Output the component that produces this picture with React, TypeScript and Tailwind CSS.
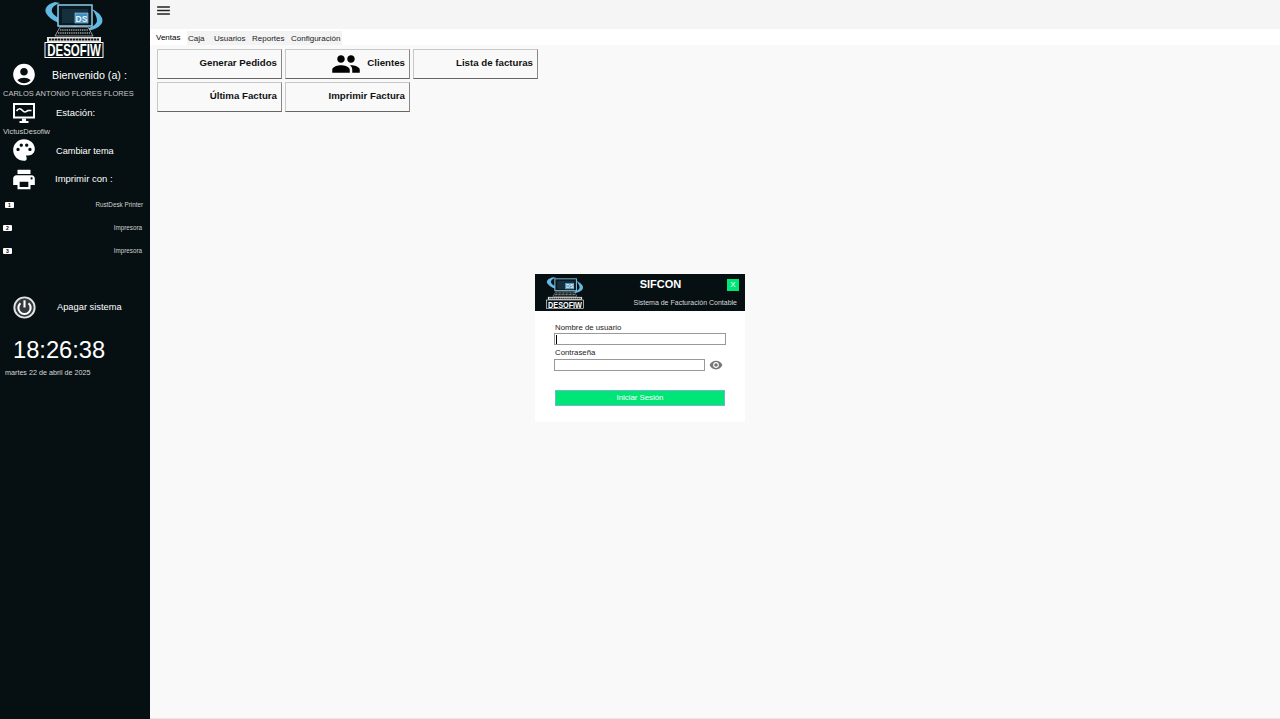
import { MdAccountCircle, MdMenu, MdPalette, MdPeople, MdPrint, MdVisibility } from "react-icons/md";

const font = "font-['Liberation_Sans',Arial,sans-serif]";

function Logo({ className }: { className: string }) {
  return (
    <svg viewBox="44 0 60 62" preserveAspectRatio="none" className={`block ${className}`}>
      <path d="M55 2 C47 4 44 9 46 13 C50 21 62 25 80 28 C68 23 55 18 52 12 C51 8 54 5 60 3 Z" fill="#63b9e2" />
      <path d="M92 9 C100 13 104 18 102 23 C99 29 88 32 76 32 C88 29 96 26 97 21 C97 17 95 13 92 9 Z" fill="#63b9e2" />
      <rect x="58" y="5" width="34" height="21" fill="#0a1a22" stroke="#8ccbe8" strokeWidth="1.5" />
      <rect x="62" y="9" width="26" height="14" fill="#14303f" />
      <rect x="75" y="13" width="13" height="10" fill="#3d8fc0" stroke="#cfe8f3" strokeWidth="0.5" />
      <text x="81.5" y="21.5" textAnchor="middle" fontSize="8.5" fontWeight="700" fill="#e8f6fc" fontFamily="Liberation Sans">DS</text>
      <path d="M55 36 L60 27 H88 L93 36 Z" fill="#060f12" stroke="#d0d0d0" strokeWidth="0.7" />
      <path d="M60 30 H88 M58 33 H90" stroke="#e5e5e5" strokeWidth="1.2" strokeDasharray="1.4 .8" />
      <rect x="47" y="37" width="54" height="5" fill="#e0e0e0" />
      <path d="M49 39.5 H99" stroke="#111" strokeWidth="1.8" strokeDasharray="2.4 .6" />
      <rect x="45" y="42.5" width="58" height="15" fill="#060f12" stroke="#fff" strokeWidth="1" />
      <text transform="translate(74 56) scale(1 1.4)" textAnchor="middle" fontSize="11.5" fontWeight="700" fill="#fff" fontFamily="Liberation Sans">DESOFIW</text>
    </svg>
  );
}

function MonitorIcon() {
  return (
    <svg viewBox="0 0 22 20" className="w-[22px] h-[20px]">
      <rect x="1" y="1" width="20" height="13.5" fill="none" stroke="#fff" strokeWidth="2" />
      <path d="M3.5 8 C5.5 5 7.5 5 9.5 7.5 C11.5 10 13 9 15 7.5 L18.5 7.5" fill="none" stroke="#fff" strokeWidth="1.6" />
      <path d="M9 15.5 H13 V18 H15.5 V20 H6.5 V18 H9 Z" fill="#fff" />
    </svg>
  );
}

function PowerIcon() {
  return (
    <svg viewBox="0 0 24 24" className="w-[23px] h-[23px] -mt-px">
      <circle cx="12" cy="12" r="10.6" fill="#34393c" stroke="#e2e2e2" strokeWidth="2" />
      <path d="M7.8 7.6 A6.4 6.4 0 1 0 16.2 7.6" fill="none" stroke="#fff" strokeWidth="2.2" />
      <path d="M12 4.5 V12" stroke="#fff" strokeWidth="2.2" />
    </svg>
  );
}

function MenuRow({ icon, label, labelClass }: { icon: React.ReactNode; label: string; labelClass: string }) {
  return (
    <div className="flex items-center h-7 pl-[11px]">
      <div className="w-[26px] flex justify-center">{icon}</div>
      <span className={`text-white whitespace-nowrap ${labelClass}`}>{label}</span>
    </div>
  );
}

function PrinterRow({ n, name, first }: { n: number; name: string; first?: boolean }) {
  return (
    <div className={`flex items-center justify-between h-[23px] ${first ? "pl-[5px] pr-[7px]" : "pl-[3px] pr-[8px]"}`}>
      <span className="w-[9px] h-[6px] bg-white rounded-[1px] text-[5px] leading-[6px] text-center text-black font-bold">{n}</span>
      <span className="text-[6.3px] text-[#d0d0d0]">{name}</span>
    </div>
  );
}

function Sidebar() {
  return (
    <aside className="w-[150px] shrink-0 h-full bg-[#060f12] flex flex-col">
      <div className="pl-[44px] h-[61px]">
        <Logo className="w-[60px] h-[62px]" />
      </div>
      <MenuRow icon={<MdAccountCircle className="text-white -mt-[2px]" size={27} />} label="Bienvenido (a) :" labelClass="text-[10.7px] ml-[15px] mt-px" />
      <div className="text-[7.5px] text-[#c8c8c8] pl-[3px] leading-[10px] whitespace-nowrap">CARLOS ANTONIO FLORES FLORES</div>
      <MenuRow icon={<MonitorIcon />} label="Estación:" labelClass="text-[9.5px] ml-[19px]" />
      <div className="text-[7.5px] text-[#d0d0d0] pl-[3px] leading-[10px] whitespace-nowrap">VictusDesofiw</div>
      <MenuRow icon={<MdPalette className="text-white -mt-[2px]" size={26} />} label="Cambiar tema" labelClass="text-[9.2px] ml-[19px] mt-[2px]" />
      <MenuRow icon={<MdPrint className="text-white" size={27} />} label="Imprimir con :" labelClass="text-[9.5px] ml-[18px]" />
      <PrinterRow n={1} name="RustDesk Printer" first />
      <PrinterRow n={2} name="Impresora" />
      <PrinterRow n={3} name="Impresora" />
      <div className="flex items-center h-7 pl-[13px] mt-[32px]">
        <PowerIcon />
        <span className="text-white text-[9.3px] ml-[21px]">Apagar sistema</span>
      </div>
      <div className="text-white text-[23.7px] leading-[30px] pl-[13px] mt-[13px]">18:26:38</div>
      <div className="text-[7.2px] text-[#d8d8d8] pl-[5px] leading-[10px] mt-[3px] whitespace-nowrap">martes 22 de abril de 2025</div>
    </aside>
  );
}

function ActionButton({ label, icon }: { label: string; icon?: React.ReactNode }) {
  return (
    <button className="w-[125px] h-[30px] flex items-center justify-end gap-[6px] pr-1 pb-px bg-[#f9f9f9] border border-[#c8c8c8] border-b-[#666] border-r-[#888] text-[9.7px] font-bold text-[#111] whitespace-nowrap">
      {icon}
      {label}
    </button>
  );
}

function LoginDialog() {
  return (
    <div className="absolute left-[385px] top-[274px] w-[210px] h-[148px] bg-white">
      <div className="h-[37px] bg-[#060f12] relative flex">
        <div className="pl-[11px] pt-[2px] h-[37px]">
          <Logo className="w-[38px] h-[35px]" />
        </div>
        <div className="flex-1 flex flex-col items-center">
          <span className="text-white text-[11px] font-bold mt-[3px] leading-[14px] mr-[8px]">SIFCON</span>
          <span className="text-[#d8d8d8] text-[7px] absolute right-[8px] bottom-[4px] leading-[9px] whitespace-nowrap">Sistema de Facturación Contable</span>
        </div>
        <span className="absolute right-[6px] top-[5px] w-[12px] h-[12px] bg-[#00e676] text-[8px] leading-[12px] text-center text-white">X</span>
      </div>
      <div className="pl-[19px] pt-[11px]">
        <div className="text-[7.8px] leading-[11px] text-[#222] pl-px">Nombre de usuario</div>
        <div className="w-[172px] h-[12px] bg-white border border-[#999] flex items-center pl-px">
          <span className="w-px h-[9px] bg-black" />
        </div>
        <div className="text-[7.8px] leading-[10px] text-[#222] pl-px mt-[3px]">Contraseña</div>
        <div className="flex items-center">
          <div className="w-[151px] h-[12px] bg-white border border-[#999]" />
          <MdVisibility className="text-[#777] ml-[4px]" size={14} />
        </div>
        <button className="block w-[170px] h-[16px] ml-px mt-[18px] bg-[#00e676] border border-[#6fb8c8] text-white text-[7.8px] leading-none">Iniciar Sesión</button>
      </div>
    </div>
  );
}

export default function App() {
  return (
    <div className={`${font} w-[1280px] h-[719px] flex overflow-hidden bg-[#f9f9f9]`}>
      <Sidebar />
      <main className="flex-1 relative flex flex-col">
        <div className="h-[29px] bg-[#f5f5f5] pl-[5px] pt-[2px]">
          <MdMenu className="text-[#222]" size={17} />
        </div>
        <div className="h-[16px] bg-white flex items-end text-[8px] text-[#222]">
          <span className="ml-[6px] w-[31px] h-[14px] leading-[14px] text-black">Ventas</span>
          <div className="flex items-center h-[14px] bg-[#f3f3f3] pr-[2px] pt-px">
            <span className="w-[27px] pl-[1px]">Caja</span>
            <span className="w-[38px]">Usuarios</span>
            <span className="w-[39px]">Reportes</span>
            <span>Configuración</span>
          </div>
        </div>
        <div className="flex-1 pl-[7px] pt-[4px] flex flex-col gap-[3px] border-b border-[#e8e8e8]">
          <div className="flex gap-[3px]">
            <ActionButton label="Generar Pedidos" />
            <ActionButton label="Clientes" icon={<MdPeople className="text-black" size={30} />} />
            <ActionButton label="Lista de facturas" />
          </div>
          <div className="flex gap-[3px]">
            <ActionButton label="Última Factura" />
            <ActionButton label="Imprimir Factura" />
          </div>
        </div>
        <LoginDialog />
      </main>
    </div>
  );
}
